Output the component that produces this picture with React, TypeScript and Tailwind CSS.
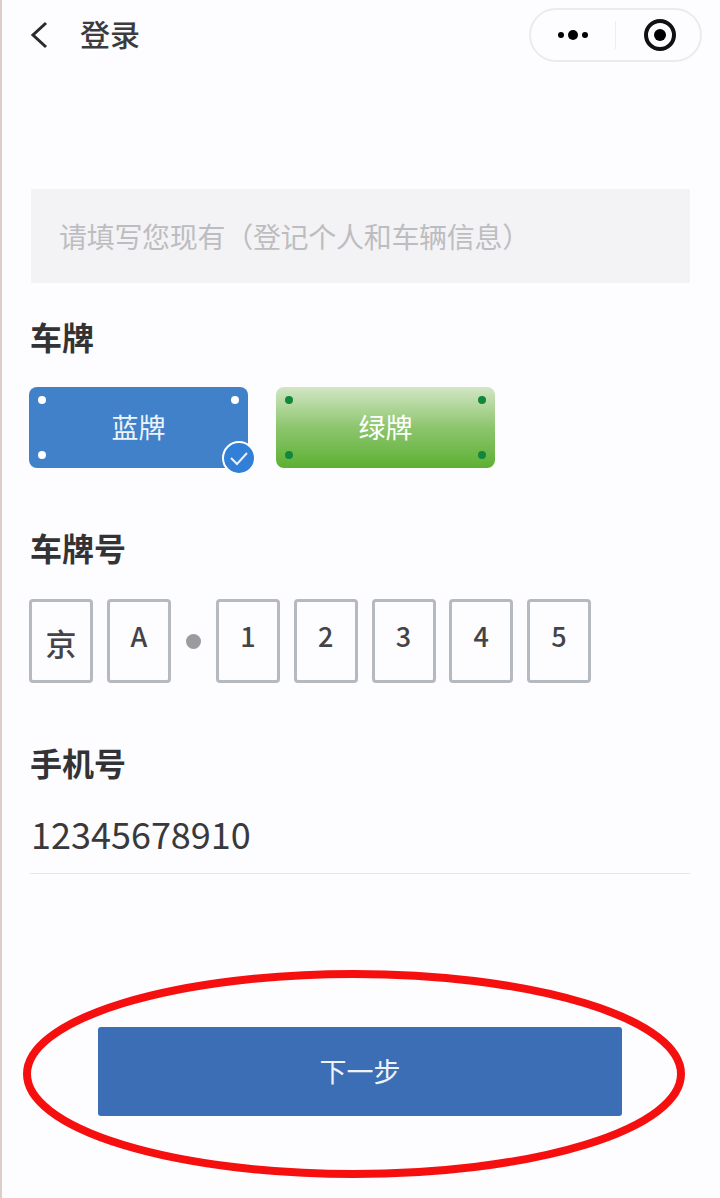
import type { FC } from "react";

const FONT = "font-['Noto_Sans_CJK_SC','Noto_Sans',sans-serif]";

const Label: FC<{ text: string }> = ({ text }) => (
  <div className="h-10 text-[32px] leading-10 font-bold text-[#333336]">{text}</div>
);

const PLATE_CHARS_A = ["京", "A"];
const PLATE_CHARS_B = ["1", "2", "3", "4", "5"];

const CharBox: FC<{ char: string; big?: boolean }> = ({ char, big }) => (
  <div
    className={`flex h-[84px] w-16 justify-center rounded-[4px] border-[3px] border-[#b5b9c0] text-[#444448] ${
      big ? "items-center pt-1 text-[31px] font-medium text-[#333336]" : "items-start pt-[14px] text-[27px] leading-10 font-medium"
    }`}
  >
    {char}
  </div>
);

const Bolts: FC<{ color: string }> = ({ color }) => (
  <div className="absolute inset-0 grid grid-cols-2 content-between justify-between px-[9px] py-[9px]">
    <span className={`h-[8px] w-[8px] rounded-full ${color}`} />
    <span className={`h-[8px] w-[8px] justify-self-end rounded-full ${color}`} />
    <span className={`h-[8px] w-[8px] rounded-full ${color}`} />
    <span className={`h-[8px] w-[8px] justify-self-end rounded-full ${color}`} />
  </div>
);

export default function App() {
  return (
    <div className={`relative h-[1198px] w-[720px] overflow-hidden border-l-2 border-[#dccdc8] bg-[#fdfcfe] ${FONT}`}>
      {/* nav bar */}
      <header className="flex h-[70px] items-start justify-between pt-2 pr-[18px] pl-[27px]">
        <div className="flex h-[54px] items-center">
          <svg className="-mt-[1px]" width="20" height="28" viewBox="0 0 20 28" fill="none" stroke="#2a2a2c" strokeWidth="3">
            <path d="M17 2 L4 14 L17 26" />
          </svg>
          <span className="mb-[4px] ml-[31px] text-[30px] font-medium text-[#3c3c3e]">登录</span>
        </div>
        <div className="flex h-[54px] w-[173px] items-center rounded-full border-2 border-[#ebebee]">
          <div className="flex h-7 w-[85px] items-center justify-center gap-[4px] border-r border-[#eeeef0]">
            <span className="h-[6px] w-[6px] rounded-full bg-black" />
            <span className="h-[10px] w-[10px] rounded-full bg-black" />
            <span className="h-[6px] w-[6px] rounded-full bg-black" />
          </div>
          <div className="flex flex-1 items-center justify-center pl-[3px]">
            <div className="flex h-[32px] w-[32px] items-center justify-center rounded-full border-[4px] border-[#111]">
              <span className="h-3 w-3 rounded-full bg-black" />
            </div>
          </div>
        </div>
      </header>

      <main className="pr-[30px] pl-[27px]">
        {/* notice */}
        <div className="mt-[119px] ml-[2px] flex h-[94px] items-center bg-[#f3f3f5] pl-[28px] text-[28px] tracking-[-0.3px] text-[#bdbdc1]">
          请填写您现有（登记个人和车辆信息）
        </div>

        <div className="mt-[33px] ml-[1px]">
          <Label text="车牌" />
        </div>
        <div className="mt-[31px] flex gap-[28px]">
          <div className="relative flex h-[81px] w-[219px] items-center justify-center rounded-[8px] bg-[#4081c9] text-[27px] text-[#eef4fb]">
            <Bolts color="bg-white" />
            蓝牌
            <div className="absolute -right-[8px] -bottom-[7px] flex h-[34px] w-[34px] items-center justify-center rounded-full border-[2.5px] border-white bg-[#317fd6]">
              <svg width="20" height="16" viewBox="0 0 20 16" fill="none" stroke="#e8f1fb" strokeWidth="2">
                <path d="M2 8 L8 14 L18 3" />
              </svg>
            </div>
          </div>
          <div className="relative flex h-[81px] w-[219px] items-center justify-center rounded-[8px] bg-gradient-to-b from-[#d2e6c4] via-[#8cc56c] to-[#5cb030] text-[27px] text-white">
            <Bolts color="bg-[#12863c]" />
            绿牌
          </div>
        </div>

        <div className="mt-[59px] ml-[1px]">
          <Label text="车牌号" />
        </div>
        <div className="mt-[32px] flex items-center">
          <div className="flex gap-[14px]">
            {PLATE_CHARS_A.map((c, i) => (
              <CharBox key={i} char={c} big={i === 0} />
            ))}
          </div>
          <span className="mx-[15px] h-[15px] w-[15px] rounded-full bg-[#9b9b9f]" />
          <div className="flex gap-[13.75px]">
            {PLATE_CHARS_B.map((c) => (
              <CharBox key={c} char={c} />
            ))}
          </div>
        </div>

        <div className="mt-[59px] ml-[1px]">
          <Label text="手机号" />
        </div>
        <div className="mt-[26px] ml-[1px] flex h-[66px] items-start border-b border-[#e6e6ea] pl-[1px] text-[36px] leading-[50px] text-[#39393c]">
          12345678910
        </div>
      </main>

      {/* next step, circled in red */}
      <div className="mt-[153px] flex justify-center pr-[2px]">
        <button className="h-[89px] w-[524px] rounded-[3px] bg-[#3b6eb4] text-[27px] text-[#eef3fa]">下一步</button>
      </div>
      <svg className="absolute top-[968px] left-[20px]" width="668" height="212" viewBox="0 0 668 212" fill="none">
        <ellipse cx="332" cy="106" rx="327" ry="100" stroke="#f5100f" strokeWidth="8" />
      </svg>
    </div>
  );
}
